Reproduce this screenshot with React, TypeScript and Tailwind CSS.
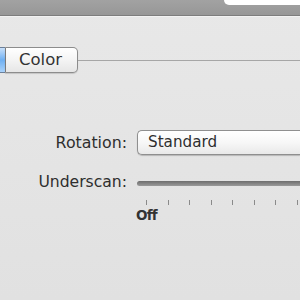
import React from "react";

export default function App() {
  const ticks = [0, 1, 2, 3, 4, 5, 6, 7];
  return (
    <div
      className="w-[300px] h-[300px] overflow-hidden bg-gradient-to-b from-[#e8e8e8] to-[#e1e1e1] flex flex-col"
      style={{ fontFamily: '"DejaVu Sans", "Noto Sans", sans-serif' }}
    >
      {/* top toolbar */}
      <div className="h-[16px] bg-gradient-to-b from-[#a2a2a2] to-[#979797] border-b border-[#7d7d7d] flex justify-end items-start shrink-0">
        <div className="w-[76px] h-[5px] bg-white rounded-bl-[8px]" />
      </div>
      <div className="h-px bg-[#f2f2f2] shrink-0" />

      {/* tabs */}
      <div className="mt-[30px] flex items-center h-[26px] shrink-0">
        <div className="h-[26px] w-[5px] bg-gradient-to-b from-[#c8e0fa] via-[#6fb0f2] to-[#a9d2fa] border-y border-[#6b7f99] shrink-0" />
        <div className="h-[26px] w-[73px] border border-l-[#7a7a7a] border-[#8c8c8c] rounded-r-[5px] bg-gradient-to-b from-[#ffffff] via-[#f4f4f4] to-[#e6e6e6] shadow-[0_1px_1px_rgba(0,0,0,0.15)] flex items-center pl-[13px] text-[16.5px] text-[#333] shrink-0">
          Color
        </div>
        <div className="flex-1 h-px bg-[#a6a6a6]" />
      </div>

      {/* rotation */}
      <div className="mt-[57px] flex items-center h-[25px] shrink-0">
        <div className="w-[127px] text-right text-[15.8px] text-[#2e2e2e] shrink-0">Rotation:</div>
        <div className="ml-[10px] flex-1 h-[25px] rounded-l-[5px] border border-r-0 border-[#8f8f8f] bg-gradient-to-b from-[#ffffff] via-[#f7f7f7] to-[#e9e9e9] shadow-[0_1px_1px_rgba(0,0,0,0.2)] flex items-center pl-[10px] text-[15.2px] text-[#2e2e2e]">
          Standard
        </div>
      </div>

      {/* underscan */}
      <div className="mt-[18px] flex items-center h-[20px] shrink-0">
        <div className="w-[127px] text-right text-[15.6px] text-[#2e2e2e] shrink-0">Underscan:</div>
        <div className="ml-[10px] flex-1 h-[5px] rounded-l-full bg-gradient-to-b from-[#6e6e6e] to-[#9a9a9a]" />
      </div>

      {/* ticks */}
      <div className="mt-[7px] ml-[146px] flex h-[5px] gap-[20.5px] shrink-0">
        {ticks.map((t) => (
          <div key={t} className="w-px h-[5px] bg-[#8a8a8a] shrink-0" />
        ))}
      </div>
      <div className="mt-[3px] ml-[136px] text-[13.5px] font-bold text-[#333] leading-[15px] tracking-[-0.8px]">Off</div>
    </div>
  );
}
